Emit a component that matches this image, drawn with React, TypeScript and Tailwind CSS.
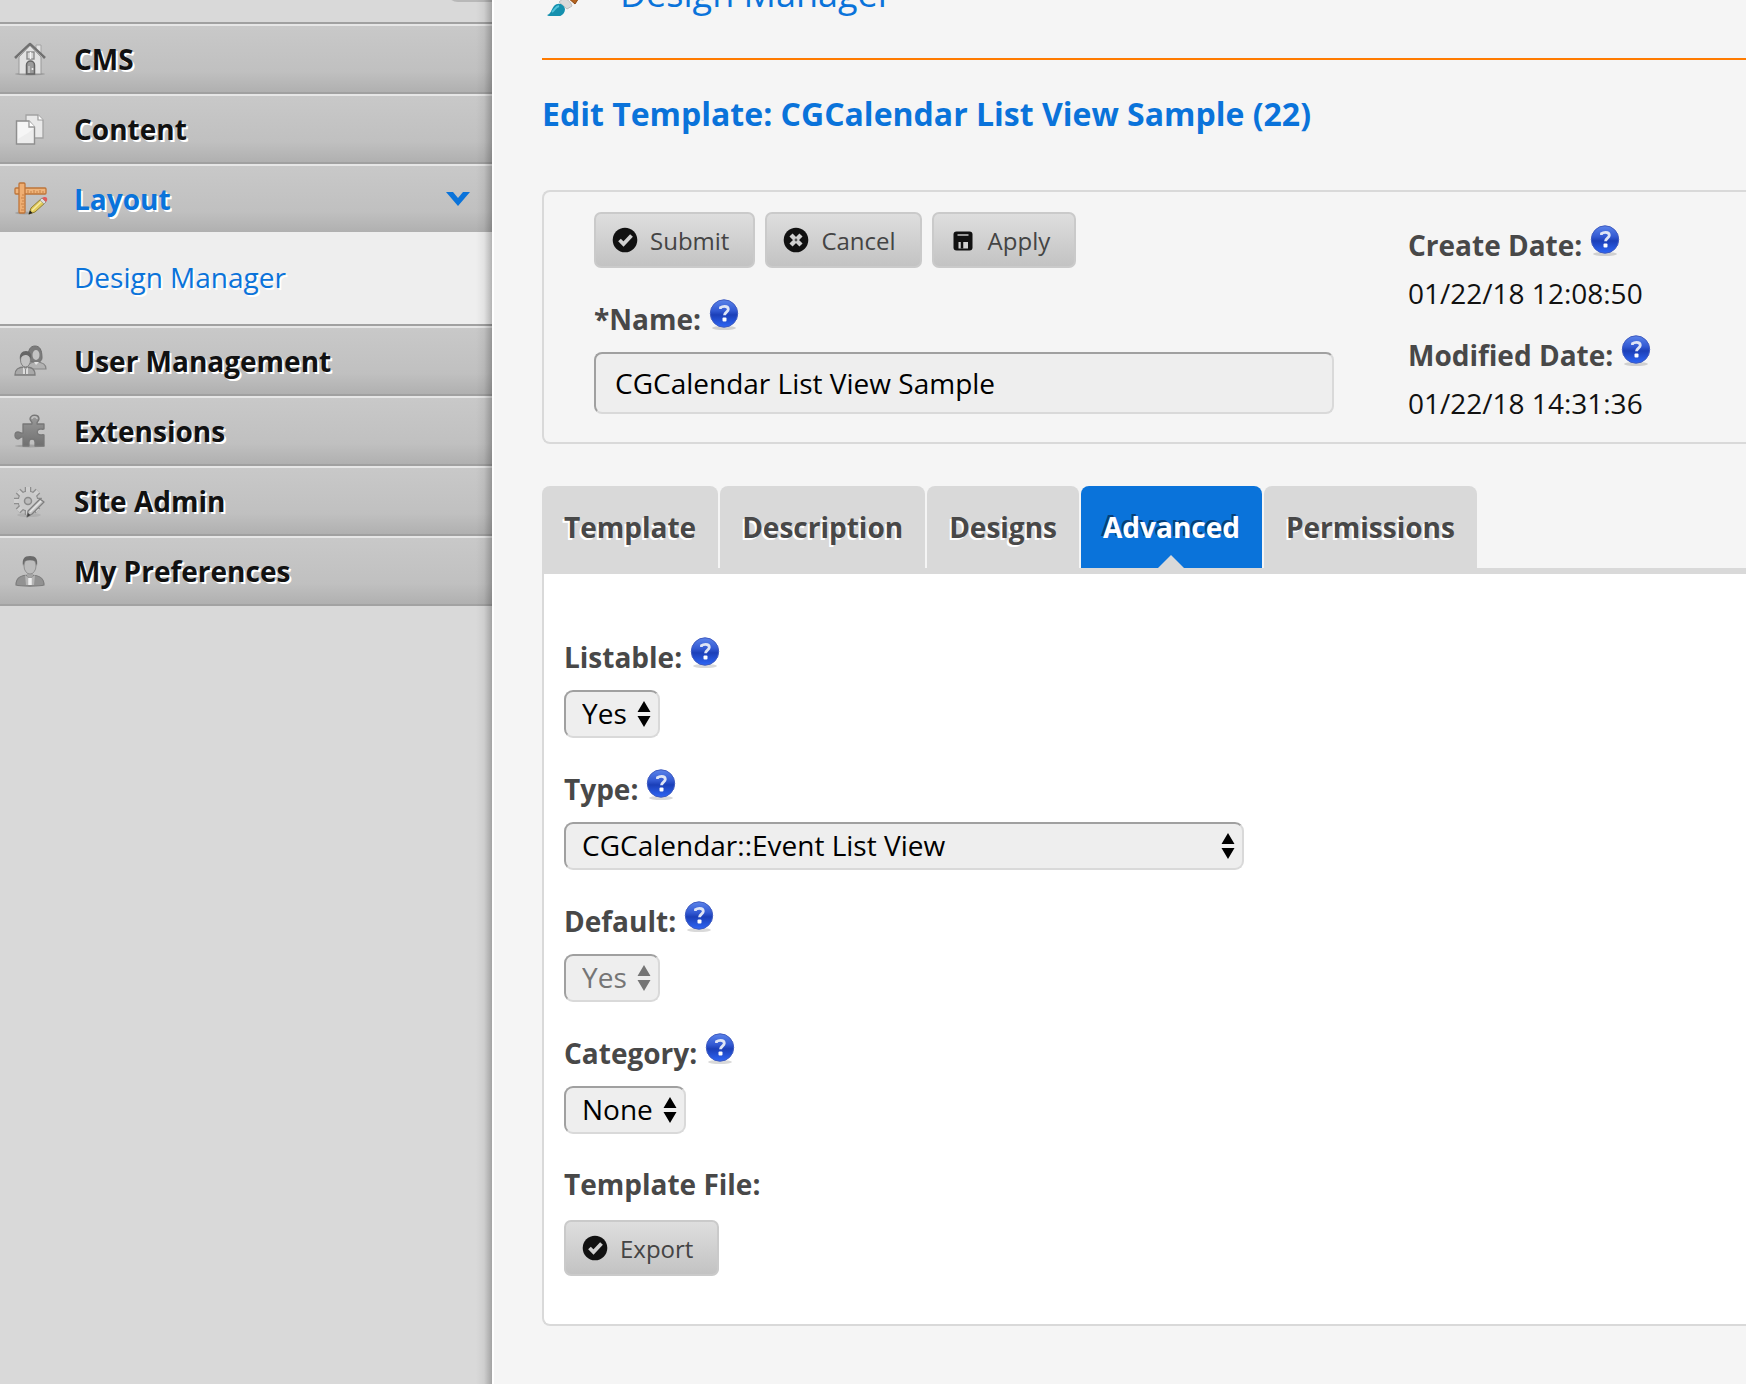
import { useState, type ReactNode } from 'react'

type IconProps = { className?: string }

const HomeIcon = () => (
  <svg width="32" height="34" viewBox="0 0 32 34" aria-hidden="true">
    <ellipse cx="16" cy="32" rx="15" ry="1.5" fill="#8d8d8d" opacity="0.7" />
    <path d="M22 3h5v9h-5z" fill="#e4e4e4" stroke="#a3a3a3" strokeWidth="1" />
    <path d="M5 15 16 4l11 11v17H5z" fill="#e2e2e2" stroke="#9a9a9a" strokeWidth="1" />
    <path d="M1 16 16 2l15 14" fill="none" stroke="#707070" strokeWidth="2.6" strokeLinejoin="round" />
    <path d="M3.5 15.500 16 4l12.500 11.500" fill="none" stroke="#b5b5b5" strokeWidth="1" />
    <rect x="13" y="10" width="7" height="7" fill="#d5d5d5" stroke="#8a8a8a" strokeWidth="1.4" />
    <path d="M16.500 10v7" stroke="#f5f5f5" strokeWidth="1.4" />
    <path d="M12.500 32V23a4 4 0 0 1 8 0v9z" fill="#9b9b9b" stroke="#656565" strokeWidth="1.5" />
    <path d="M15 31v-7" stroke="#c8c8c8" strokeWidth="1.6" />
    <circle cx="18.500" cy="27" r="1" fill="#eee" />
  </svg>
)

const PagesIcon = () => (
  <svg width="32" height="34" viewBox="0 0 32 34" aria-hidden="true">
    <path d="M12 3h12l5 5v18H12z" fill="#e9e9e9" stroke="#a3a3a3" strokeWidth="1.3" />
    <path d="M24 3v5h5" fill="#fff" stroke="#9b9b9b" strokeWidth="1.2" />
    <path d="M2.500 9H15l5.500 6v17h-18z" fill="#ededed" stroke="#8f8f8f" strokeWidth="1.4" />
    <path d="M4 10h10v6h6l-6 5-10 6z" fill="#fafafa" opacity="0.7" />
    <path d="M15 9v6h6" fill="#fff" stroke="#9b9b9b" strokeWidth="1.3" />
  </svg>
)

const LayoutIcon = () => (
  <svg width="34" height="34" viewBox="0 0 34 34" aria-hidden="true">
    <ellipse cx="10" cy="31" rx="9" ry="1.5" fill="#8d8d8d" opacity="0.6" />
    <rect x="1" y="6" width="31" height="6" rx="1" fill="#efb47b" stroke="#bd7439" strokeWidth="1.3" />
    <path d="M14 11V8m3 3V9m3 2V8m3 3V9m3 2V8m3 3V9" stroke="#c98146" strokeWidth="1" />
    <rect x="5" y="1" width="6" height="30" rx="1" fill="#efae72" stroke="#bd7439" strokeWidth="1.3" />
    <path d="M8 13h2m-3 3h3m-2 3h2m-3 3h3m-2 3h2m-3 3h3" stroke="#c98146" strokeWidth="1" />
    <path d="M15 32l2-6 11-10 4 4-11 10z" fill="#e2cb5c" stroke="#8f7d35" strokeWidth="1" />
    <path d="M18 28.500 29 18" stroke="#f6eba6" strokeWidth="1.4" />
    <path d="m26 18 4 4 2-2-4-4z" fill="#dcdcdc" stroke="#888" strokeWidth="0.6" />
    <path d="m28 16 4 4c2-2 1.500-5-1-5-1 0-2 0-3 1z" fill="#e15b5b" />
    <path d="m14.500 32.500 1.500-4 2.500 2.500z" fill="#222" />
  </svg>
)

const UsersIcon = () => (
  <svg width="34" height="34" viewBox="0 0 34 34" aria-hidden="true">
    <path d="M14 14c0-8 2-12 7-12s7 4 7 12c0 2-2 4-3 4h-8c-2 0-3-2-3-4z" fill="#7c7c7c" stroke="#6f6f6f" />
    <ellipse cx="22" cy="11" rx="3.500" ry="5" fill="#c4c4c4" />
    <path d="M13 25c0-5 3-7 9-7s10 2 10 7z" fill="#b2b2b2" stroke="#858585" strokeWidth="1.200" />
    <path d="m20 18 2 3 3-3" fill="#e3e3e3" />
    <path d="M1 31c0-6 3-8 10-8s10 2 10 8z" fill="#a9a9a9" stroke="#7c7c7c" strokeWidth="1.300" />
    <ellipse cx="11.500" cy="16" rx="5" ry="7" fill="#c2c2c2" stroke="#808080" strokeWidth="1" />
    <path d="M6 16c-1-6 2-9 6-9s6 3 5 8c-2-3-3-4-5-4s-5 1-6 5z" fill="#666" />
    <path d="m9 23 2.500 3 2.500-3v7h-5z" fill="#dcdcdc" />
    <path d="M11.500 25v5" stroke="#8b8b8b" />
  </svg>
)

const PuzzleIcon = () => (
  <svg width="32" height="34" viewBox="0 0 32 34" aria-hidden="true">
    <defs>
      <linearGradient id="puzzle" x1="0" y1="0" x2="0" y2="1">
        <stop offset="0" stopColor="#9b9b9b" />
        <stop offset="1" stopColor="#707070" />
      </linearGradient>
    </defs>
    <ellipse cx="16" cy="32" rx="15" ry="1.500" fill="#888" opacity="0.5" />
    <path
      d="M9 10h9c1-2-2-3-2-5 0-5 9-5 9 0 0 2-3 3-2 5h7v5c-2 1-4-1-6 1-2 3 0 5 3 5 1 0 2-1 3 0v11h-9v-4c0-4-6-4-6 0v4H9v-9c-2-1-3 2-5 2-4 0-4-7 0-7 2 0 3 2 5 1z"
      fill="url(#puzzle)"
      stroke="#777"
      strokeWidth="1.300"
      strokeLinejoin="round"
    />
    <path d="M18 5c0-3 5-3 5 0" fill="none" stroke="#c0c0c0" strokeWidth="1.500" />
  </svg>
)

const TEETH = 'M14 3v28M0 17h28M4.100 7.100l19.800 19.800M23.900 7.100 4.100 26.900'

const GearIcon = () => (
  <svg width="32" height="34" viewBox="0 0 32 34" aria-hidden="true">
    <ellipse cx="15" cy="31" rx="12" ry="2" fill="#8d8d8d" opacity="0.300" />
    <path d={TEETH} stroke="#8e8e8e" strokeWidth="6.500" />
    <circle cx="14" cy="17" r="10.500" fill="#8e8e8e" />
    <path d={TEETH} stroke="#cfcfcf" strokeWidth="4" />
    <circle cx="14" cy="17" r="9.500" fill="#cacaca" />
    <circle cx="14" cy="17" r="3.500" fill="#bcbcbc" stroke="#8a8a8a" strokeWidth="1.500" />
    <path d="m13 33 1-6 12-12 4 3-12 12z" fill="#c4c4c4" stroke="#7e7e7e" strokeWidth="1.300" strokeLinejoin="round" />
    <path d="m16 28 11-11" stroke="#e6e6e6" strokeWidth="1.400" />
    <path d="m13 33 1-4 2.500 2z" fill="#444" />
  </svg>
)

const UserIcon = () => (
  <svg width="32" height="34" viewBox="0 0 32 34" aria-hidden="true">
    <path d="M2 31c0-7 4-10 14-10s14 3 14 10c-4 1.500-24 1.500-28 0z" fill="#929292" stroke="#7c7c7c" strokeWidth="1.200" />
    <path d="m11 21 5 4 5-4-1 10h-8z" fill="#b4b4b4" />
    <path d="M16 24v7" stroke="#eee" strokeWidth="3.500" />
    <path d="M13 17h6v5l-3 2-3-2z" fill="#a5a5a5" />
    <ellipse cx="16" cy="12" rx="6" ry="8" fill="#bcbcbc" stroke="#909090" />
    <path d="M9 12C8 5 10 2 16 2s8 3 7 10l-2-5c-3-1-7-1-10 0z" fill="#6a6a6a" />
  </svg>
)

const BrushIcon = () => (
  <svg width="64" height="64" viewBox="0 0 64 64" aria-hidden="true">
    <path d="M25 45 50 14c4-3 7 0 5 4L33 52z" fill="#b4631d" stroke="#8a4713" />
    <path d="m29 46 22-28" stroke="#dd944c" strokeWidth="2.500" />
    <path d="m17 50 5-4c5 2 7 5 8 8l-5 3z" fill="#dadada" stroke="#bdbdbd" />
    <path d="M5 63c4-1 4-5 7-9 4-4 10-2 11 3 0 5-4 8-10 8-4 0-7-1-8-2z" fill="#1590ae" />
    <path d="M10 60c3-2 3-5 7-6" fill="none" stroke="#52c4db" strokeWidth="2" />
  </svg>
)

const ChevronIcon = () => (
  <svg width="24" height="16" viewBox="0 0 24 16" aria-hidden="true">
    <path d="M0 1h7l5 6 5-6h7L12 15z" fill="#0a73da" />
  </svg>
)

const HelpIcon = () => (
  <svg width="32" height="32" viewBox="0 0 32 32" aria-hidden="true">
    <defs>
      <linearGradient id="help" x1="0" y1="0" x2="0" y2="1">
        <stop offset="0" stopColor="#5a83ea" />
        <stop offset="0.400" stopColor="#3259d2" />
        <stop offset="0.550" stopColor="#1b3fb8" />
        <stop offset="1" stopColor="#2e66f5" />
      </linearGradient>
    </defs>
    <ellipse cx="16" cy="30" rx="12" ry="2" fill="#000" opacity="0.150" />
    <circle cx="16" cy="15.500" r="13.700" fill="url(#help)" stroke="#3f5bc0" strokeWidth="1" />
    <path
      d="M12.500 11V9.500c1-.8 2.500-1.200 4-1.200 2.500 0 3.800 1.200 3.800 3 0 2.700-3.800 3-3.800 6"
      fill="none"
      stroke="#dfe5f5"
      strokeWidth="2.800"
    />
    <rect x="14.500" y="19.500" width="4" height="4" rx="1" fill="#fff" />
  </svg>
)

const CheckIcon = () => (
  <svg width="26" height="26" viewBox="0 0 26 26" aria-hidden="true">
    <circle cx="13" cy="13" r="12.300" fill="#111" />
    <path d="m7.500 13 4 4 8-8.500" fill="none" stroke="#d0d0d0" strokeWidth="3.800" />
  </svg>
)

const CancelIcon = () => (
  <svg width="26" height="26" viewBox="0 0 26 26" aria-hidden="true">
    <circle cx="13" cy="13" r="12.300" fill="#111" />
    <path d="m8 8 10 10M18 8 8 18" stroke="#d0d0d0" strokeWidth="4.400" />
    <circle cx="13" cy="13" r="1.400" fill="#555" />
  </svg>
)

const SaveIcon = () => (
  <svg width="26" height="26" viewBox="0 0 26 26" aria-hidden="true">
    <rect x="3.500" y="4.500" width="19" height="19" rx="3" fill="#111" />
    <path d="M7.500 8h11" stroke="#999" strokeWidth="2" />
    <path d="M8.500 15H18v6.500H8.500z" fill="#d0d0d0" />
    <path d="M12 14.500v7" stroke="#111" strokeWidth="2.500" />
  </svg>
)

const SortArrows = ({ className }: IconProps) => (
  <svg width="14" height="26" viewBox="0 0 14 26" className={className} aria-hidden="true">
    <path d="M7 0l6.500 11H.5zM7 26l6.500-11H.5z" fill="currentColor" />
  </svg>
)

const NAV = [
  { label: 'CMS', icon: <HomeIcon /> },
  { label: 'Content', icon: <PagesIcon /> },
  { label: 'Layout', icon: <LayoutIcon />, children: ['Design Manager'] },
  { label: 'User Management', icon: <UsersIcon /> },
  { label: 'Extensions', icon: <PuzzleIcon /> },
  { label: 'Site Admin', icon: <GearIcon /> },
  { label: 'My Preferences', icon: <UserIcon /> },
]

const TABS = ['Template', 'Description', 'Designs', 'Advanced', 'Permissions']

const Sidebar = () => (
  <aside className="relative w-[492px] shrink-0 bg-[#d9d9d9] pt-[22px]">
    <div className="absolute -top-10 left-[446px] h-[42px] w-[46px] rounded-bl-xl border-b-2 border-l-2 border-[#b8b8b8] bg-[#d0d0d0]" />
    <nav className="border-b-2 border-[#a2a2a2]">
      <ul>
        {NAV.map((item) => (
          <li key={item.label}>
            <a
              href="#"
              className={`flex h-[70px] items-center border-t-2 border-[#a0a0a0] bg-linear-to-b from-[#c9c9c9] via-[#c0c0c0] via-70% to-[#b0b0b0] pt-0.5 pr-[22px] pl-3.5 text-[28px] font-bold leading-[42px] shadow-[inset_0_2px_0_#e6e6e6] [text-shadow:2px_2px_0_#fff] ${
                item.children ? 'text-[#0a73da]' : 'text-[#111]'
              }`}
            >
              <span className="flex w-[60px] shrink-0">{item.icon}</span>
              <span className="flex-1">{item.label}</span>
              {item.children && <ChevronIcon />}
            </a>
            {item.children && (
              <ul className="bg-[#eee] pt-6 pb-[26px]">
                {item.children.map((c) => (
                  <li key={c}>
                    <a
                      href="#"
                      className="block pl-[74px] text-[28px] leading-[42px] text-[#0a73da] [text-shadow:2px_2px_0_#fff]"
                    >
                      {c}
                    </a>
                  </li>
                ))}
              </ul>
            )}
          </li>
        ))}
      </ul>
    </nav>
    <div className="pointer-events-none absolute inset-y-0 right-0 w-4 bg-linear-to-r from-transparent via-black/5 to-black/25" />
  </aside>
)

const Button = ({ icon, children }: { icon: ReactNode; children: ReactNode }) => (
  <button
    type="button"
    className="flex h-14 items-center gap-3 rounded-[7px] border-2 border-[#cacaca] bg-linear-to-b from-[#dedede] to-[#c3c3c3] pr-6 pl-4 text-[24px] leading-8 text-[#444]"
  >
    {icon}
    <span className="pt-0.5">{children}</span>
  </button>
)

const Label = ({ htmlFor, children }: { htmlFor?: string; children: ReactNode }) => (
  <div className="flex items-baseline gap-[7px] text-[28px] leading-[42px] font-bold text-[#484848]">
    {htmlFor ? <label htmlFor={htmlFor}>{children}</label> : <span>{children}</span>}
    <a href="#" aria-label="Help">
      <HelpIcon />
    </a>
  </div>
)

type SelectFieldProps = {
  id: string
  label: string
  options: string[]
  wide?: boolean
  disabled?: boolean
}

const SelectField = ({ id, label, options, wide, disabled }: SelectFieldProps) => (
  <div className="flex flex-col items-start gap-3">
    <Label htmlFor={id}>{label}</Label>
    <div
      className={`relative max-w-full ${wide ? 'w-[680px]' : ''} ${
        disabled ? 'text-[#757575]' : 'text-black'
      }`}
    >
      <select
        id={id}
        disabled={disabled}
        className="block h-12 w-full appearance-none rounded-[9px] border-2 border-t-[#a0a0a0] border-r-[#d9d9d9] border-b-[#d9d9d9] border-l-[#a0a0a0] bg-[#eee] pr-[31px] pb-0.5 pl-4 text-[28px] disabled:opacity-100"
      >
        {options.map((o) => (
          <option key={o}>{o}</option>
        ))}
      </select>
      <SortArrows className="pointer-events-none absolute top-[11px] right-[9px]" />
    </div>
  </div>
)

const App = () => {
  const [active, setActive] = useState('Advanced')
  const [name, setName] = useState('CGCalendar List View Sample')

  return (
    <div className="flex min-h-screen overflow-hidden bg-[#f5f5f5] font-['Open_Sans',sans-serif]">
      <Sidebar />
      <main className="min-w-0 flex-1 border-l-2 border-white pl-12">
        <header className="flex h-[60px] items-start border-b-2 border-[#ff7b00]">
          <span className="-mt-12 w-[78px] shrink-0">
            <BrushIcon />
          </span>
          <h1 className="-mt-[30px] text-[36px] leading-[48px] text-[#0a73da]">Design Manager</h1>
        </header>

        <h2 className="mt-8 text-[32px] leading-[44px] font-bold text-[#0a73da]">
          Edit Template: CGCalendar List View Sample (22)
        </h2>

        <section className="mt-[54px] flex gap-[74px] rounded-l-lg border-2 border-r-0 border-[#d9d9d9] pt-5 pb-[18px] pl-[50px]">
          <div className="flex-1">
            <div className="flex gap-2.5">
              <Button icon={<CheckIcon />}>Submit</Button>
              <Button icon={<CancelIcon />}>Cancel</Button>
              <Button icon={<SaveIcon />}>Apply</Button>
            </div>
            <div className="mt-[30px] flex flex-col gap-3">
              <Label htmlFor="name">*Name:</Label>
              <input
                id="name"
                type="text"
                value={name}
                onChange={(e) => setName(e.target.value)}
                className="h-[62px] w-full rounded-lg border-2 border-t-[#a0a0a0] border-r-[#d9d9d9] border-b-[#d9d9d9] border-l-[#a0a0a0] bg-[#eee] px-[19px] text-[28px] text-black"
              />
            </div>
          </div>
          <div className="w-[338px] shrink-0 pt-3">
            <Label>Create Date:</Label>
            <p className="mt-1.5 text-[28px] leading-[42px] text-[#111]">01/22/18 12:08:50</p>
            <div className="mt-5">
              <Label>Modified Date:</Label>
            </div>
            <p className="mt-1.5 text-[28px] leading-[42px] text-[#111]">01/22/18 14:31:36</p>
          </div>
        </section>

        <div role="tablist" className="mt-[42px] flex gap-0.5">
          {TABS.map((t) => (
            <button
              key={t}
              type="button"
              role="tab"
              aria-selected={t === active}
              onClick={() => setActive(t)}
              className={`relative rounded-t-lg px-[22px] py-[22px] text-[28px] leading-[38px] font-bold ${
                t === active
                  ? 'bg-[#0a73da] text-white [text-shadow:-2px_-2px_0_#083f78]'
                  : 'bg-[#d9d9d9] text-[#484848] [text-shadow:-2px_2px_0_#fff]'
              }`}
            >
              {t}
              {t === active && (
                <span className="absolute bottom-0 left-1/2 -translate-x-1/2 border-x-[13px] border-b-[13px] border-x-transparent border-b-[#d9d9d9]" />
              )}
            </button>
          ))}
        </div>
        <section className="flex flex-col items-start gap-[30px] rounded-bl-lg border-t-[6px] border-b-2 border-l-2 border-[#d9d9d9] bg-white pt-[62px] pb-12 pl-5">
          <SelectField id="listable" label="Listable:" options={['Yes', 'No']} />
          <SelectField id="type" label="Type:" options={['CGCalendar::Event List View']} wide />
          <SelectField id="default" label="Default:" options={['Yes', 'No']} disabled />
          <SelectField id="category" label="Category:" options={['None']} />
          <div className="flex flex-col items-start gap-4">
            <p className="text-[28px] leading-[40px] font-bold text-[#484848]">Template File:</p>
            <Button icon={<CheckIcon />}>Export</Button>
          </div>
        </section>
      </main>
    </div>
  )
}

export default App
